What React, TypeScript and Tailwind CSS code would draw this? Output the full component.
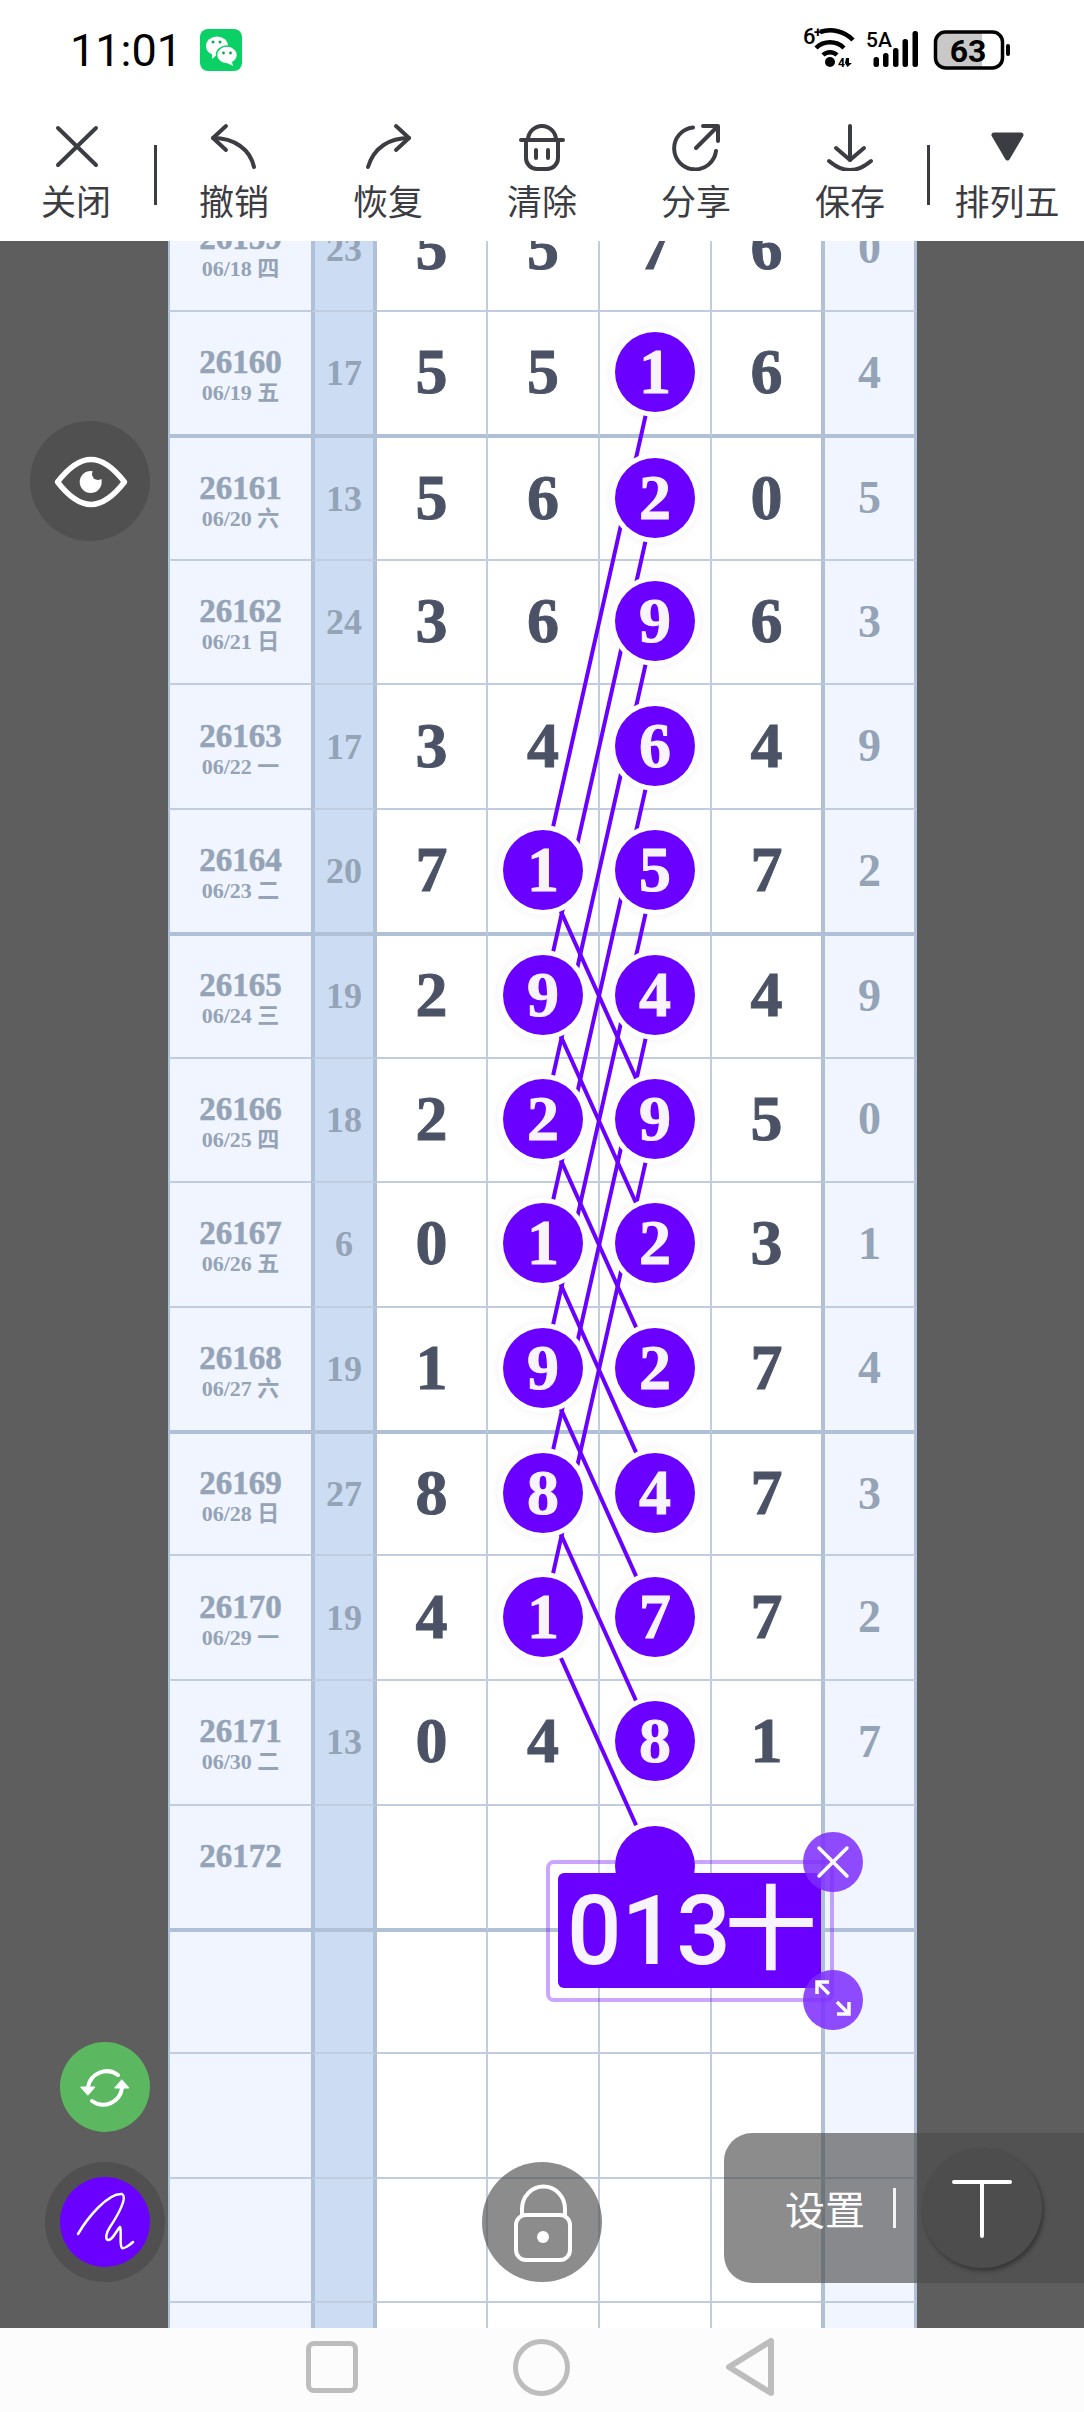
import React from 'react';

const serif = "font-['Liberation_Serif','Noto_Sans_CJK_SC',serif]";

const rows = [
  { no: '26159', date: '06/18 四', sum: '23', d: ['5', '5', '7', '6'], last: '0', balls: [] as number[] },
  { no: '26160', date: '06/19 五', sum: '17', d: ['5', '5', '1', '6'], last: '4', balls: [2] },
  { no: '26161', date: '06/20 六', sum: '13', d: ['5', '6', '2', '0'], last: '5', balls: [2] },
  { no: '26162', date: '06/21 日', sum: '24', d: ['3', '6', '9', '6'], last: '3', balls: [2] },
  { no: '26163', date: '06/22 一', sum: '17', d: ['3', '4', '6', '4'], last: '9', balls: [2] },
  { no: '26164', date: '06/23 二', sum: '20', d: ['7', '1', '5', '7'], last: '2', balls: [1, 2] },
  { no: '26165', date: '06/24 三', sum: '19', d: ['2', '9', '4', '4'], last: '9', balls: [1, 2] },
  { no: '26166', date: '06/25 四', sum: '18', d: ['2', '2', '9', '5'], last: '0', balls: [1, 2] },
  { no: '26167', date: '06/26 五', sum: '6', d: ['0', '1', '2', '3'], last: '1', balls: [1, 2] },
  { no: '26168', date: '06/27 六', sum: '19', d: ['1', '9', '2', '7'], last: '4', balls: [1, 2] },
  { no: '26169', date: '06/28 日', sum: '27', d: ['8', '8', '4', '7'], last: '3', balls: [1, 2] },
  { no: '26170', date: '06/29 一', sum: '19', d: ['4', '1', '7', '7'], last: '2', balls: [1, 2] },
  { no: '26171', date: '06/30 二', sum: '13', d: ['0', '4', '8', '1'], last: '7', balls: [2] },
  { no: '26172', date: '', sum: '', d: ['', '', '', ''], last: '', balls: [2] },
  { no: '', date: '', sum: '', d: ['', '', '', ''], last: '', balls: [] },
  { no: '', date: '', sum: '', d: ['', '', '', ''], last: '', balls: [] },
  { no: '', date: '', sum: '', d: ['', '', '', ''], last: '', balls: [] },
  { no: '', date: '', sum: '', d: ['', '', '', ''], last: '', balls: [] },
];

// every 4th row carries the heavy rule
const isThick = (i: number) => i % 4 === 1;
const rowHeight = (i: number) => (isThick(i) ? 126 : i % 4 === 2 ? 122.5 : i % 4 === 3 ? 124.5 : 124.8);

const centers: number[] = [];
let acc = 0;
rows.forEach((_, i) => {
  const h = rowHeight(i);
  centers.push(acc + (h - (isThick(i) ? 4 : 2)) / 2);
  acc += h;
});

const colX = [0, 375, 487];
const links: [number, number, number, number][] = [];
for (let i = 1; i <= 7; i++) links.push([colX[2], centers[i], colX[1], centers[i + 4]]);
for (let i = 5; i <= 11; i++) links.push([colX[1], centers[i], colX[2], centers[i + 2]]);

const stroke = '#3c3c43';

const tools = [
  {
    label: '撤销',
    icon: (
      <>
        <path d="M9 15C30 15 46 26 50 44" />
        <path d="M22 3L9 15L22 27" />
      </>
    ),
  },
  {
    label: '恢复',
    icon: (
      <>
        <path d="M51 15C32 15 16 24 10 44" />
        <path d="M38 3L51 15L38 27" />
      </>
    ),
  },
  {
    label: '清除',
    icon: (
      <>
        <path d="M9 17H51" />
        <path d="M16 17A14 14 0 0 1 44 17" />
        <path d="M14 17V35A11 11 0 0 0 25 46H35A11 11 0 0 0 46 35V17" />
        <path d="M24 27V35M36 27V35" />
      </>
    ),
  },
  {
    label: '分享',
    icon: (
      <>
        <path d="M27 4.5A21 21 0 1 0 50 28" />
        <path d="M30 25L51 4" />
        <path d="M37 3H52V18" />
      </>
    ),
  },
  {
    label: '保存',
    icon: (
      <>
        <path d="M30 3V37" />
        <path d="M16 25L30 37L44 25" />
        <path d="M9 38Q30 56 51 38" />
      </>
    ),
  },
];

function ToolIcon({ children }: { children: React.ReactNode }) {
  return (
    <svg width="60" height="48" viewBox="0 0 60 48" fill="none" stroke={stroke} strokeWidth="4" strokeLinecap="round" strokeLinejoin="round">
      {children}
    </svg>
  );
}

const toolLabel = "mt-[5px] text-[35px] leading-[48px] text-[#3c3c43] font-['Noto_Sans_CJK_SC',sans-serif] whitespace-nowrap";

function StatusBar() {
  return (
    <div className="h-[100px] flex items-center pl-[70px] pr-[70px] bg-white">
      <span className="text-[45px] leading-none text-black font-['Roboto',sans-serif]">11:01</span>
      <svg className="ml-[18px]" width="42" height="42" viewBox="0 0 42 42">
        <rect width="42" height="42" rx="8" fill="#0ad065" />
        <ellipse cx="17" cy="17" rx="11" ry="9.5" fill="#fff" />
        <path d="M12 24L12 30L18 25Z" fill="#fff" />
        <ellipse cx="27" cy="26" rx="10.5" ry="9" fill="#fff" stroke="#0ad065" strokeWidth="1.5" />
        <path d="M32 33L33 37L27 34Z" fill="#fff" />
        <circle cx="13" cy="13" r="1.5" fill="#0aa858" />
        <circle cx="20" cy="13" r="1.5" fill="#0aa858" />
        <circle cx="23.5" cy="24" r="1.4" fill="#0aa858" />
        <circle cx="30.5" cy="24" r="1.4" fill="#0aa858" />
      </svg>
      <svg className="ml-auto" width="214" height="50" viewBox="0 0 214 50" fontFamily="Roboto, sans-serif">
        <text x="3" y="19" fontSize="22" fontWeight="500">6</text>
        <text x="14" y="12" fontSize="14" fontWeight="700">+</text>
        <g fill="none" stroke="#000" strokeWidth="4.5">
          <path d="M20 7A32 32 0 0 1 53 15" />
          <path d="M16 23A20 20 0 0 1 44 23" />
          <path d="M23 30A10 10 0 0 1 37 30" />
        </g>
        <circle cx="30" cy="37" r="5" />
        <text x="38" y="42" fontSize="12" fontWeight="700">4</text>
        <path d="M46 33H49V38H52L47.5 42L45 38Z" />
        <text x="66" y="22" fontSize="21" fontWeight="500">5A</text>
        <rect x="73.5" y="32" width="5.5" height="10" rx="2.5" />
        <rect x="83" y="28" width="5.5" height="14" rx="2.5" />
        <rect x="93" y="23" width="5.5" height="19" rx="2.5" />
        <rect x="102.5" y="14" width="5.5" height="28" rx="2.5" />
        <rect x="112.5" y="6" width="5.5" height="36" rx="2.5" />
        <path d="M146 8H182V42H146A9 9 0 0 1 137 33V17A9 9 0 0 1 146 8Z" fill="#c8c8c8" />
        <rect x="135.5" y="7" width="67" height="36" rx="10" fill="none" stroke="#000" strokeWidth="3.5" />
        <text x="168" y="37" fontSize="32" fontWeight="700" textAnchor="middle">63</text>
        <rect x="206" y="19" width="4" height="12" rx="2" />
      </svg>
    </div>
  );
}

function Toolbar() {
  return (
    <div className="h-[141px] flex items-start bg-white pt-[23px]">
      <div className="w-[152px] mr-[2px] flex flex-col items-center">
        <ToolIcon>
          <path d="M12 5L50 42M50 5L12 42" />
        </ToolIcon>
        <span className={toolLabel}>关闭</span>
      </div>
      <div className="w-[3px] h-[60px] mt-[22px] bg-[#3c3c43]" />
      {tools.map((t) => (
        <div key={t.label} className="w-[154px] flex flex-col items-center">
          <ToolIcon>{t.icon}</ToolIcon>
          <span className={toolLabel}>{t.label}</span>
        </div>
      ))}
      <div className="w-[3px] h-[60px] mt-[22px] bg-[#3c3c43]" />
      <div className="w-[154px] flex flex-col items-center">
        <ToolIcon>
          <path d="M17 12H44L30.5 35Z" fill={stroke} strokeWidth="5" />
        </ToolIcon>
        <span className={toolLabel}>排列五</span>
      </div>
    </div>
  );
}

function Ball({ value }: { value: string }) {
  return (
    <div className={`relative z-[2] w-20 h-20 shrink-0 rounded-full bg-[#6a00ff] flex items-center justify-center text-[64px] leading-none font-bold text-[#f8f4ff] [-webkit-text-stroke:1px] shadow-[0_0_0_5px_#fff,0_0_8px_6px_rgba(0,0,0,0.05)] ${serif}`}>
      {value}
    </div>
  );
}

function Table() {
  return (
    <div className="relative w-[749px] ml-[168px] -mt-[53.5px] bg-white">
      {rows.map((r, i) => {
        const line = isThick(i) ? 'border-b-4 border-[#b0c0d6]' : 'border-b-2 border-[#c0cde0]';
        return (
          <div
            key={i}
            style={{ height: rowHeight(i) }}
            className={`grid grid-cols-[143px_66px_111px_112px_112px_109px_96px] ${serif}`}
          >
            <div className={`border-l-2 border-l-[#b0c0d6] bg-[#f0f5ff] flex flex-col items-center justify-center pt-[4px] font-bold text-[#94a3b6] ${line}`}>
              <span className="text-[33px] leading-[36px] h-[36px] [-webkit-text-stroke:0.5px]">{r.no}</span>
              <span className="text-[22px] leading-[26px] h-[26px]">{r.date}</span>
            </div>
            <div className={`border-x-4 border-x-[#b0c0d6] bg-[#cbdcf3] flex items-center justify-center text-[36px] font-bold text-[#94a3b6] ${line}`}>
              {r.sum}
            </div>
            {r.d.map((v, c) => (
              <div
                key={c}
                className={`flex items-center justify-center pb-[2px] text-[64px] leading-none font-bold text-[#4b5265] [-webkit-text-stroke:1px] ${c < 3 ? 'border-r-2 border-r-[#c0cde0]' : ''} ${line}`}
              >
                {r.balls.includes(c) ? <Ball value={v} /> : v}
              </div>
            ))}
            <div className={`border-l-4 border-r-[3px] border-x-[#b0c0d6] bg-[#f0f5ff] flex items-center justify-center pb-[2px] text-[46px] font-bold text-[#94a3b6] ${line}`}>
              {r.last}
            </div>
          </div>
        );
      })}
      <svg className="absolute left-0 top-0 z-[1] pointer-events-none" width="749" height={acc}>
        {links.map((l, i) => (
          <line key={i} x1={l[0]} y1={l[1]} x2={l[2]} y2={l[3]} stroke="#6a00ff" strokeWidth="4" />
        ))}
      </svg>
    </div>
  );
}

function Overlays() {
  return (
    <>
      <div className="absolute z-10 left-[30px] top-[180px] w-[120px] h-[120px] rounded-full bg-[#505050] flex items-center justify-center">
        <svg width="120" height="120" viewBox="0 0 120 120">
          <path d="M27.5 61C40 45 50 38.5 61 38.5S82 45 94.5 61C82 77 72 83.5 61 83.5S40 77 27.5 61Z" fill="none" stroke="#fff" strokeWidth="5.5" strokeLinejoin="round" />
          <circle cx="60.7" cy="61" r="11" fill="#fff" />
          <circle cx="68" cy="53" r="6" fill="#505050" />
        </svg>
      </div>

      <div className="absolute z-10 left-[60px] top-[1801px] w-[90px] h-[90px] rounded-full bg-[#5cb860]">
        <svg width="90" height="90" viewBox="0 0 90 90" fill="none" stroke="#fff" strokeWidth="4" strokeLinecap="round">
          <path d="M58 33A19 19 0 0 0 28 45" />
          <path d="M32 59A19 19 0 0 0 62 46" />
          <path d="M21 45H35L28 53Z" fill="#fff" strokeWidth="1" strokeLinejoin="round" />
          <path d="M55 46H69L62 38Z" fill="#fff" strokeWidth="1" strokeLinejoin="round" />
        </svg>
      </div>

      <div className="absolute z-10 left-[45px] top-[1921px] w-[120px] h-[120px] rounded-full bg-[#505050] flex items-center justify-center">
        <div className="w-[90px] h-[90px] rounded-full bg-[#6a00ff]">
          <svg width="90" height="90" viewBox="0 0 90 90" fill="none" stroke="#fff" strokeWidth="2.5" strokeLinecap="round" strokeLinejoin="round">
            <path d="M18 57C28 40 48 16 62 17C68 20 58 38 50 50C46 56 45 62 48 63C52 64 56 54 60 50C62 55 59 68 62 71C64 72 70 68 73 65" />
          </svg>
        </div>
      </div>

      <div className="absolute z-10 left-[482px] top-[1921px] w-[120px] h-[120px] rounded-full bg-[rgba(75,75,75,0.64)]">
        <svg width="120" height="120" viewBox="0 0 120 120" fill="none" stroke="#fff" strokeWidth="4">
          <path d="M40 53V47A21 22 0 0 1 83 47V53" />
          <rect x="34" y="53" width="54" height="45" rx="10" />
          <circle cx="61" cy="75" r="6" fill="#fff" stroke="none" />
        </svg>
      </div>

      <div className="absolute z-10 left-[724px] right-0 top-[1892px] h-[150px] rounded-l-[28px] bg-[rgba(75,75,75,0.64)] flex items-center">
        <span className="ml-[61px] text-[40px] leading-none text-white font-['Noto_Sans_CJK_SC',sans-serif]">设置</span>
        <div className="ml-[28px] w-[3px] h-[40px] bg-white/90" />
        <div className="ml-[26px] w-[120px] h-[120px] rounded-full bg-[#4d4d4d] shadow-[2px_3px_4px_rgba(0,0,0,0.35)] flex items-center justify-center">
          <svg width="120" height="120" viewBox="0 0 120 120" fill="none" stroke="#fff" strokeWidth="4" strokeLinecap="round">
            <path d="M32 34H88M60 34V88" />
          </svg>
        </div>
      </div>

      {/* selected text label sitting on the chart */}
      <div className="absolute z-10 left-[546px] top-[1619px] w-[288px] h-[142px] rounded-lg border-4 border-[#6a00ff]/35" />
      <div className="absolute z-10 left-[558px] top-[1632px] w-[263px] h-[115px] rounded-md bg-[#6a00ff] pl-[9px] flex items-center text-[96px] leading-none font-medium text-[#f8f4ff] font-['Roboto','Noto_Sans_CJK_SC',sans-serif] whitespace-nowrap">
        013<span className="-ml-[6px] text-[92px]">十</span>
      </div>
      <div className="absolute z-10 left-[803px] top-[1591px] w-[60px] h-[60px] rounded-full bg-[#7c2bff]/85">
        <svg width="60" height="60" viewBox="0 0 60 60" stroke="#fff" strokeWidth="3.5" strokeLinecap="round">
          <path d="M16 16L44 44M44 16L16 44" />
        </svg>
      </div>
      <div className="absolute z-10 left-[803px] top-[1729px] w-[60px] h-[60px] rounded-full bg-[#7c2bff]/85">
        <svg width="60" height="60" viewBox="0 0 60 60" fill="none" stroke="#fff" strokeWidth="3.5">
          <path d="M15 13L26 24M34 32L45 43" />
          <path d="M14 24V12H26" />
          <path d="M46 32V44H34" />
        </svg>
      </div>
    </>
  );
}

function NavBar() {
  return (
    <div className="h-[84px] shrink-0 bg-[#fcfcfc] flex items-center pb-[6px]">
      <div className="ml-[306px] w-[52px] h-[52px] rounded-lg border-[5px] border-[#bdbdbd]" />
      <div className="ml-[155px] w-[57px] h-[57px] rounded-full border-[5px] border-[#bdbdbd]" />
      <svg className="ml-[155px]" width="50" height="60" viewBox="0 0 50 60" fill="none" stroke="#bdbdbd" strokeWidth="6" strokeLinejoin="round">
        <path d="M4 30L46 4V56Z" />
      </svg>
    </div>
  );
}

export default function App() {
  return (
    <div className="w-[1084px] h-[2412px] flex flex-col overflow-hidden bg-white">
      <StatusBar />
      <Toolbar />
      <div className="relative flex-1 overflow-hidden bg-[#5e5e5e]">
        <Table />
        <Overlays />
      </div>
      <NavBar />
    </div>
  );
}
